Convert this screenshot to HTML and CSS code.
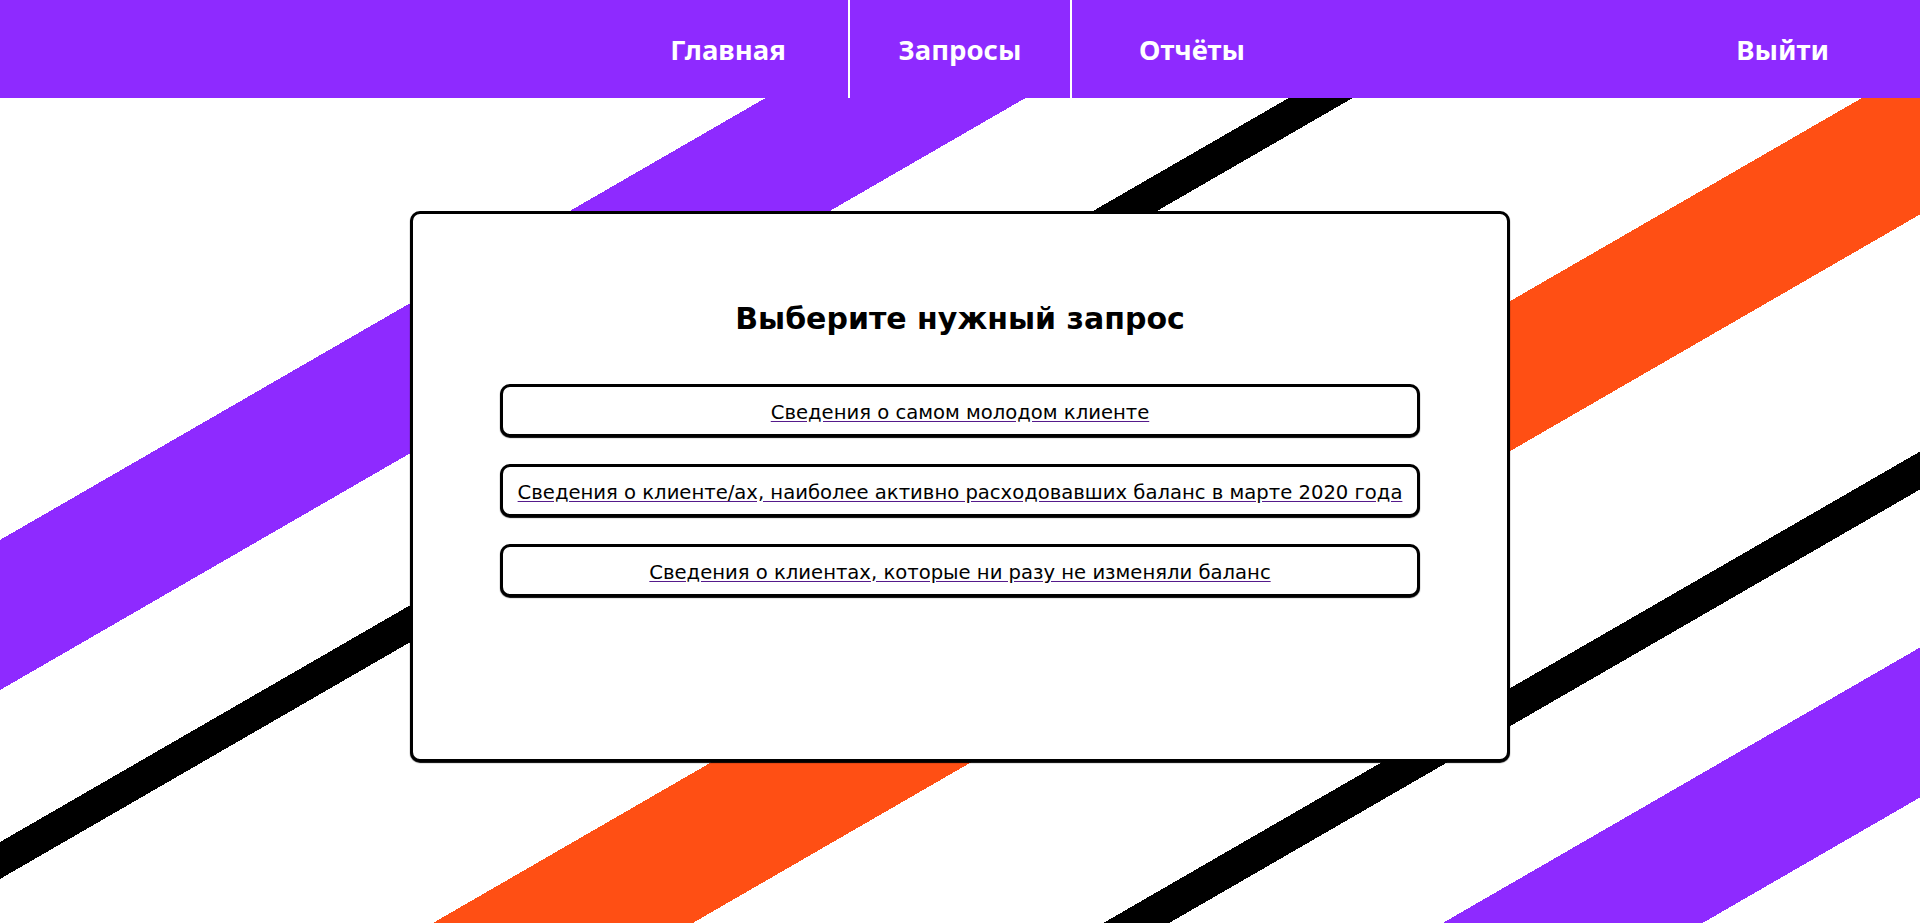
FILE: index.html
```html
<!DOCTYPE html>
<html lang="ru">
<head>
<meta charset="utf-8">
<title>Запросы</title>
<link rel="stylesheet" href="styles.css">
</head>
<body>
<div class="page">
  <header class="topbar">
    <div class="topbar-side"></div>
    <nav class="nav">
      <a class="nav-item" href="#">Главная</a>
      <a class="nav-item nav-item--divided" href="#">Запросы</a>
      <a class="nav-item" href="#">Отчёты</a>
    </nav>
    <div class="topbar-side topbar-side--end">
      <a class="nav-logout" href="#">Выйти</a>
    </div>
  </header>
  <main class="main">
    <section class="card">
      <h1 class="card-title">Выберите нужный запрос</h1>
      <div class="query-list">
        <a class="query" href="#"><span class="query-text">Сведения о самом молодом клиенте</span></a>
        <a class="query" href="#"><span class="query-text">Сведения о клиенте/ах, наиболее активно расходовавших баланс в марте 2020 года</span></a>
        <a class="query" href="#"><span class="query-text">Сведения о клиентах, которые ни разу не изменяли баланс</span></a>
      </div>
    </section>
  </main>
</div>
</body>
</html>
```

FILE: styles.css
```css
html, body {
  margin: 0;
  padding: 0;
}

body {
  font-family: "DejaVu Sans", Verdana, sans-serif;
  color: #000;
}

.page {
  min-height: 100vh;
  background-color: #fff;
  background-image: linear-gradient(150deg,
    #fff 0px, #fff 467.6px,
    #8e2aff 467.6px, #8e2aff 597.6px,
    #fff 597.6px, #fff 729.2px,
    #000 729.2px, #000 761.2px,
    #fff 761.2px, #fff 1015.8px,
    #ff4f14 1015.8px, #ff4f14 1145.7px,
    #fff 1145.7px, #fff 1351px,
    #000 1351px, #000 1383.9px,
    #fff 1383.9px, #fff 1520.7px,
    #8e2aff 1520.7px, #8e2aff 1650.6px,
    #fff 1650.6px);
  background-repeat: no-repeat;
  background-size: 1920px 923px;
}

/* ---------- top bar ---------- */
.topbar {
  display: grid;
  grid-template-columns: 1fr auto 1fr;
  height: 98px;
  background: #8e2aff;
  font-family: "Noto Sans", "Open Sans", sans-serif;
  font-weight: 700;
  font-size: 27.5px;
}

.topbar-side {
  display: flex;
  align-items: center;
}

.topbar-side--end {
  justify-content: flex-end;
  padding-right: 91px;
}

.nav {
  display: flex;
  gap: 8px;
}

.nav-item,
.nav-logout {
  color: #fff;
  text-decoration: none;
}

.nav-item {
  box-sizing: border-box;
  width: 224px;
  display: flex;
  align-items: center;
  justify-content: center;
}

.nav-item--divided {
  border-left: 2px solid #fff;
  border-right: 2px solid #fff;
}

/* ---------- card ---------- */
.main {
  padding-top: 113px;
}

.card {
  box-sizing: border-box;
  width: 1100px;
  height: 551px;
  margin: 0 auto;
  background: #fff;
  border: 3px solid #000;
  border-radius: 10px;
  box-shadow: 0 1px 1px #000;
  padding: 87px 87px 0;
}

.card-title {
  margin: 0;
  font-size: 30px;
  line-height: 36px;
  font-weight: 700;
  text-align: center;
}

.query-list {
  margin-top: 47px;
  display: flex;
  flex-direction: column;
  gap: 27px;
}

.query {
  box-sizing: border-box;
  height: 53px;
  display: flex;
  align-items: center;
  justify-content: center;
  padding-top: 3px;
  border: 3px solid #000;
  border-radius: 10px;
  box-shadow: 0 1px 1px #000;
  background: #fff;
  color: #000;
  text-decoration: none;
  font-size: 19.6px;
}

.query-text {
  color: #000;
  text-decoration: underline;
  text-decoration-color: #551a8b;
  text-underline-offset: 2px;
}
```
